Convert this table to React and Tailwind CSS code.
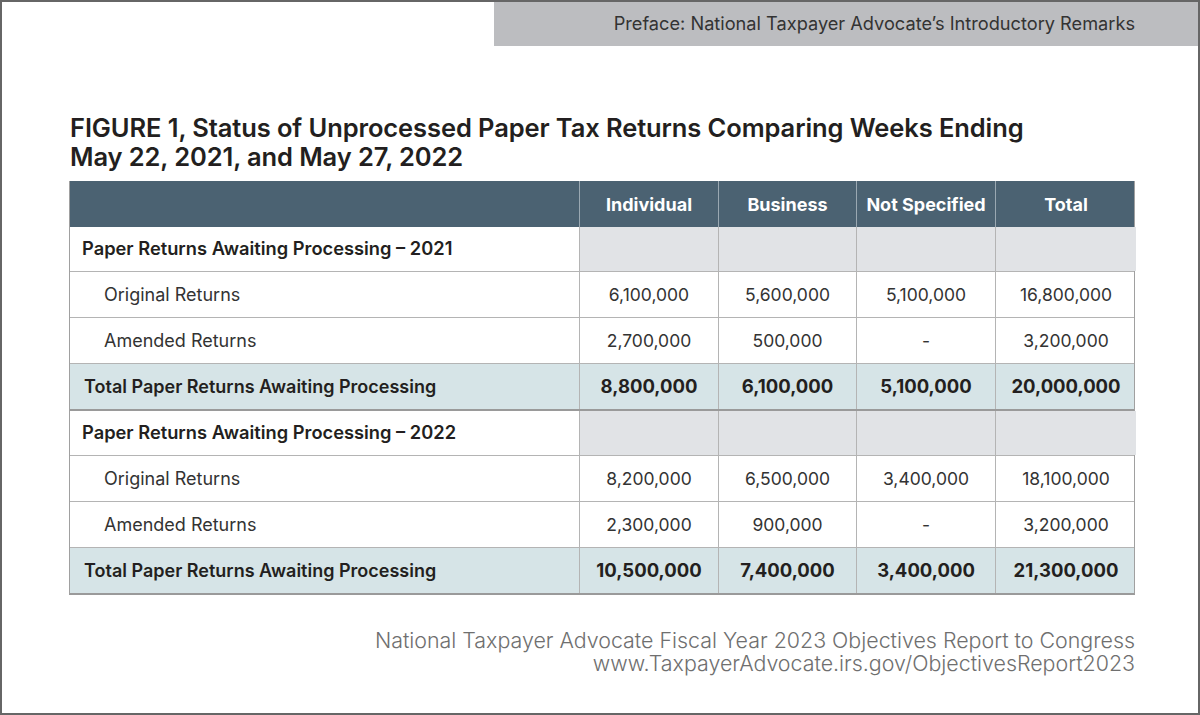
import React from "react";

const cols = "grid grid-cols-[510px_139px_138px_139px_140px]";

const Section = ({ year, original, amended, total }) => (
  <>
    <div className={`${cols} h-[45px] border-b border-[#b4b4b4]`}>
      <div className="flex items-center border-r border-[#b4b4b4] bg-white pl-[12px] text-[18.3px] font-semibold text-[#231f20]">
        Paper Returns Awaiting Processing – {year}
      </div>
      {[0, 1, 2, 3].map((i) => (
        <div
          key={i}
          className={`bg-[#e1e3e6] ${i < 3 ? "border-r border-[#b4b4b4]" : ""}`}
        />
      ))}
    </div>
    {[
      ["Original Returns", original],
      ["Amended Returns", amended],
    ].map(([label, vals]) => (
      <div key={label} className={`${cols} h-[46px] border-b border-[#b4b4b4]`}>
        <div className="flex items-center border-r border-[#b4b4b4] pl-[34px] text-[#333]">
          {label}
        </div>
        {vals.map((v, i) => (
          <div
            key={i}
            className={`flex items-center justify-center pt-[2px] text-[17.5px] text-[#333] ${
              i < 3 ? "border-r border-[#b4b4b4]" : ""
            }`}
          >
            {v}
          </div>
        ))}
      </div>
    ))}
    <div className={`${cols} h-[45px] bg-[#d6e4e7]`}>
      <div className="flex items-center border-r border-[#b4b4b4] pl-[14px] font-semibold text-[#231f20]">
        Total Paper Returns Awaiting Processing
      </div>
      {total.map((v, i) => (
        <div
          key={i}
          className={`flex items-center justify-center text-[18.5px] font-bold text-[#231f20] ${
            i < 3 ? "border-r border-[#b4b4b4]" : ""
          }`}
        >
          {v}
        </div>
      ))}
    </div>
  </>
);

export default function App() {
  return (
    <div className="box-border flex h-[715px] w-[1200px] flex-col border-2 border-[#666] bg-white font-['Inter',sans-serif] text-[18px]">
      <div className="flex justify-end">
        <div className="flex h-[44px] w-[704px] items-center justify-end bg-[#bcbdc0] pr-[63px] text-[18.2px] text-[#333]">
          Preface: National Taxpayer Advocate’s Introductory Remarks
        </div>
      </div>

      <div className="pl-[67px] pt-[67px]">
        <h1 className="pl-[1px] text-[25.5px] font-semibold leading-[29px] tracking-[-0.1px] text-[#231f20]">
          FIGURE 1, Status of Unprocessed Paper Tax Returns Comparing Weeks Ending
          <br />
          May 22, 2021, and May 27, 2022
        </h1>

        <div className="mt-[10px] w-[1066px] border-x border-b-2 border-[#a0a0a0] border-b-[#9a9a9a]">
          <div className={`${cols} h-[46px] bg-[#4b6272] text-white font-bold`}>
            <div className="border-r border-[#9aa8b2]" />
            {["Individual", "Business", "Not Specified", "Total"].map((h, i) => (
              <div
                key={h}
                className={`flex items-center justify-center ${
                  i < 3 ? "border-r border-[#9aa8b2]" : ""
                }`}
              >
                {h}
              </div>
            ))}
          </div>
          <Section
            year="2021"
            original={["6,100,000", "5,600,000", "5,100,000", "16,800,000"]}
            amended={["2,700,000", "500,000", "-", "3,200,000"]}
            total={["8,800,000", "6,100,000", "5,100,000", "20,000,000"]}
          />
          <div className="h-[2px] bg-[#9a9a9a]" />
          <Section
            year="2022"
            original={["8,200,000", "6,500,000", "3,400,000", "18,100,000"]}
            amended={["2,300,000", "900,000", "-", "3,200,000"]}
            total={["10,500,000", "7,400,000", "3,400,000", "21,300,000"]}
          />
        </div>
      </div>

      <div className="mt-[34px] pr-[63px] text-right text-[21.4px] font-light leading-[23px] text-[#6f6f6f]">
        <p>National Taxpayer Advocate Fiscal Year 2023 Objectives Report to Congress</p>
        <p>www.TaxpayerAdvocate.irs.gov/ObjectivesReport2023</p>
      </div>
    </div>
  );
}
